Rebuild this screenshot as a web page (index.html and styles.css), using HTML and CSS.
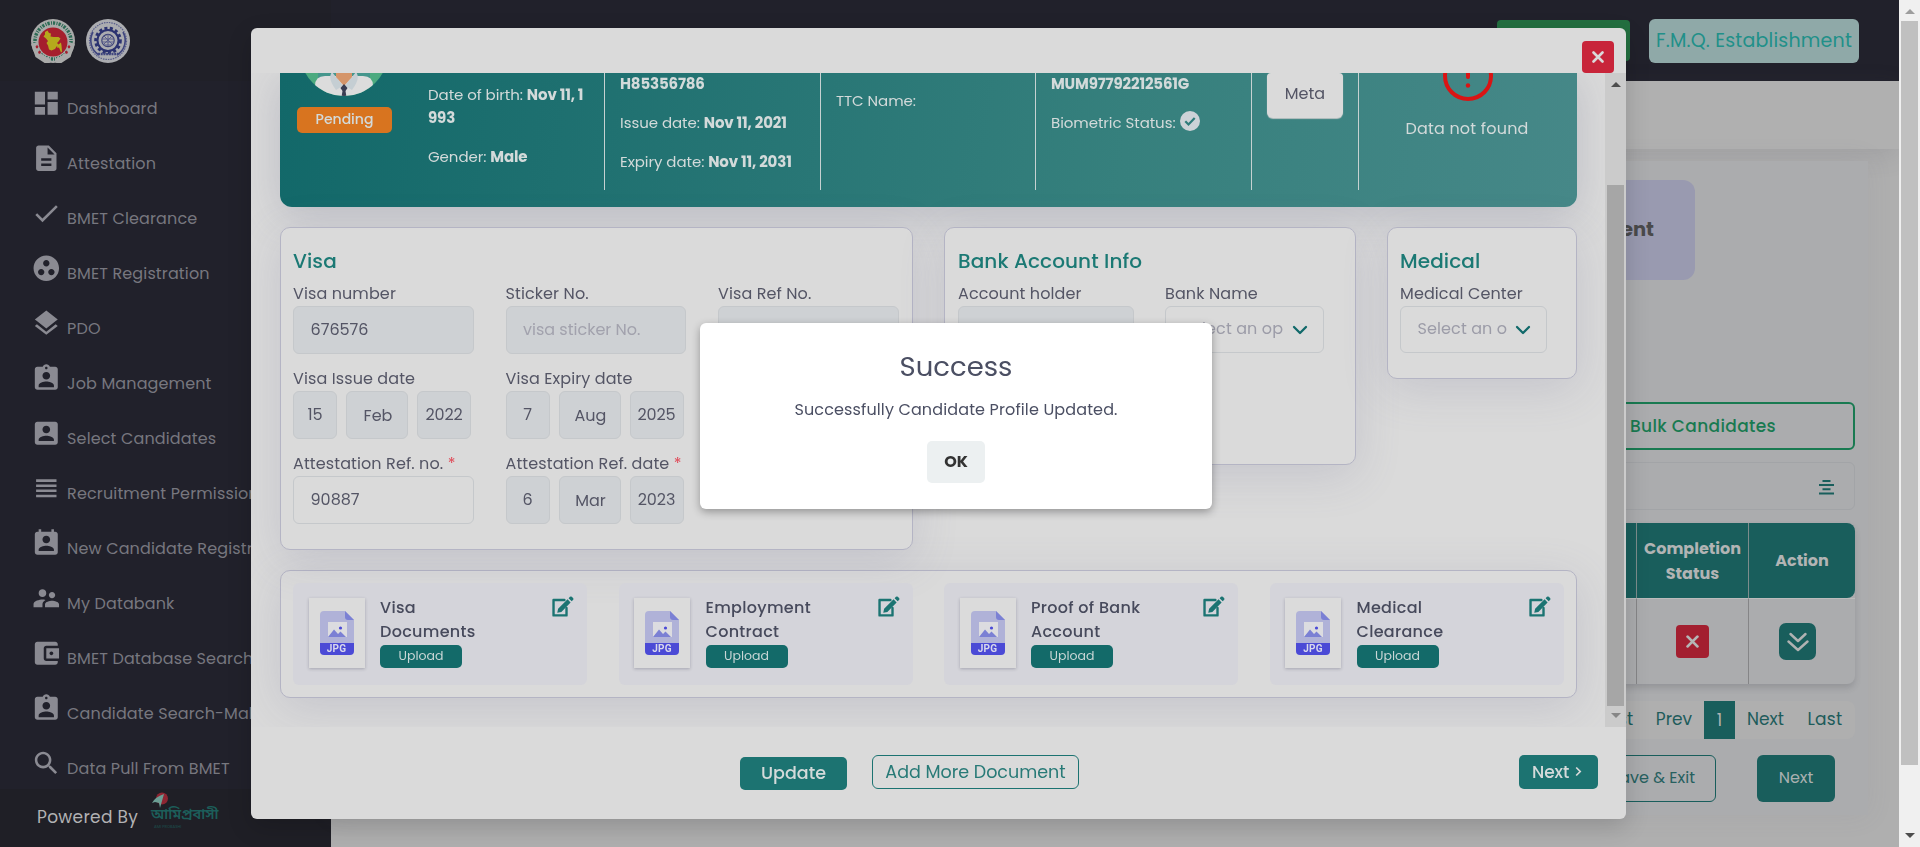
FILE: index.html
```html
<!DOCTYPE html>
<html lang="en">
<head>
<meta charset="utf-8">
<title>Candidate Profile</title>
<link rel="stylesheet" href="styles.css">
</head>
<body>
<svg class="defs" width="0" height="0" aria-hidden="true">
  <symbol id="i-badge" viewBox="0 0 24 24"><path d="M19 3h-4.180C14.4 1.840 13.3 1 12 1c-1.3 0-2.4.84-2.820 2H5c-1.100 0-2 .9-2 2v14c0 1.100.9 2 2 2h14c1.100 0 2-.9 2-2V5c0-1.100-.9-2-2-2zm-7 0c.55 0 1 .45 1 1s-.45 1-1 1-1-.45-1-1 .45-1 1-1zm0 4c1.660 0 3 1.340 3 3s-1.340 3-3 3-3-1.340-3-3 1.340-3 3-3zm6 12H6v-1.400c0-2 4-3.100 6-3.100s6 1.100 6 3.100V19z"/></symbol>
  <symbol id="i-edit" viewBox="0 0 24 22"><path d="M14 4.200H2.600V20.300H16.200V12.500" fill="none" stroke="currentColor" stroke-width="2.500" stroke-linejoin="round" stroke-linecap="round"/><path d="M17.300 3.500l3.200 3.200-9.700 10-4.300.9.900-4.300zM18.400 2.400l1.400-1.500q1-1 2 0l1.200 1.200q1 1 0 2l-1.400 1.500z"/></symbol>
  <symbol id="i-jpg" viewBox="0 0 34 44">
    <path d="M4 0h21l9 9v24H0V4q0-4 4-4z" fill="#b0b2d8"/><path d="M25 0l9 9h-6q-3 0-3-3z" fill="#7b80d4"/>
    <path d="M0 32h34v8q0 4-4 4H4q-4 0-4-4z" fill="#4b4ad6"/><path d="M8 11h19v15H8z" fill="#dcdce0"/>
    <path d="M8 26l6-7.500 4 4.500 2.500-2.500L26 26z" fill="#7b80d4"/><circle cx="20.500" cy="17" r="1.600" fill="#4b4ad6"/></symbol>
  <symbol id="i-down" viewBox="0 0 16 10"><path d="M2 2l6 6 6-6" fill="none" stroke="#11696a" stroke-width="2.300" stroke-linecap="round" stroke-linejoin="round"/></symbol>
  <symbol id="i-x" viewBox="0 0 12 12"><path d="M1.500 1.500l9 9m0-9l-9 9" fill="none" stroke="currentColor" stroke-width="2.600" stroke-linecap="round"/></symbol>
</svg>

<div class="window">
  <div class="app">
    <aside class="side">
      <div class="brand">
        <svg class="seal" viewBox="0 0 44 44"><circle cx="22" cy="22" r="22" fill="#a9aaa9"/><circle cx="22" cy="22" r="18" fill="none" stroke="#2c6b55" stroke-width="3.500" stroke-dasharray="2.200 1.300 1 1" pathLength="110"/><path d="M3 24l4 12 9 6 3-2M41 24l-4 12-9 6-3-2" fill="none" stroke="#a9aaa9" stroke-width="6"/><circle cx="22" cy="23" r="14.500" fill="#a51f2d"/><path d="M14 13l2.500-1.500 1.500 2.500 2 .5-.5 3 3 .5h5l2 1.500-2 3-1.500 1.500 1.500 1.500 2.500-2 .5 3 .5 6-1 1-2-5-1.500.5-.5-2-2 3-3.500 1.500-2.500-1-1-4-1.500-2.500 1.500-2-2-2.500-2.500-2 1.500-2z" fill="#b5aa1c"/><path d="M4.500 27.500l1.500-1.500 1.500 1.500-.8 1.800H5.200zM7 33l1.500-1.500L10 33l-.8 1.800H7.800zM36.500 27.500L38 26l1.500 1.500-.8 1.800h-1.500zM34 33l1.500-1.500L37 33l-.8 1.800h-1.500z" fill="#a51f2d"/></svg>
        <svg class="seal" viewBox="0 0 44 44"><circle cx="22" cy="22" r="22" fill="#abacb0"/><circle cx="22" cy="22" r="18.500" fill="none" stroke="#5a5f8c" stroke-width="1.200" stroke-dasharray="1.500 1"/><path d="M7 13a17 17 0 0 0 6 23M37 13a17 17 0 0 1-6 23" fill="none" stroke="#41477f" stroke-width="1.600"/><circle cx="22" cy="21.500" r="12.300" fill="none" stroke="#2b3270" stroke-width="3" stroke-dasharray="3 2.400"/><circle cx="22" cy="21.500" r="10.500" fill="none" stroke="#2b3270" stroke-width="2"/><circle cx="22" cy="21.500" r="6.200" fill="none" stroke="#3c4277" stroke-width="1.200"/><path d="M16 20h12M16 23h12M18 26h8M22 15v12M18 17l8 8m0-8l-8 8" stroke="#5a5f8c" stroke-width="1"/><path d="M12 35h20" stroke="#41477f" stroke-width="2.500" stroke-dasharray="2 .7"/></svg>
      </div>
      <nav class="menu">
        <a class="item"><svg class="ico" viewBox="0 0 24 24"><path d="M3 13h8V3H3v10zm0 8h8v-6H3v6zm10 0h8V11h-8v10zm0-18v6h8V3h-8z"/></svg><span>Dashboard</span></a>
        <a class="item"><svg class="ico" viewBox="0 0 24 24"><path d="M14 2H6c-1.100 0-1.990.9-1.990 2L4 20c0 1.100.89 2 1.990 2H18c1.100 0 2-.9 2-2V8l-6-6zm2 16H8v-2h8v2zm0-4H8v-2h8v2zm-3-5V3.500L18.500 9H13z"/></svg><span>Attestation</span></a>
        <a class="item"><svg class="ico" viewBox="0 0 24 24"><path d="M9 16.170L4.830 12l-1.420 1.410L9 19 21 7l-1.410-1.410z"/></svg><span>BMET Clearance</span></a>
        <a class="item"><svg class="ico" viewBox="0 0 24 24"><path d="M12 2C6.480 2 2 6.480 2 12s4.480 10 10 10 10-4.480 10-10S17.520 2 12 2zM8 17.500c-1.380 0-2.500-1.120-2.500-2.500s1.120-2.500 2.500-2.500 2.500 1.120 2.500 2.500-1.120 2.500-2.500 2.500zM9.500 8c0-1.380 1.120-2.500 2.500-2.500s2.500 1.120 2.500 2.500-1.120 2.500-2.500 2.500S9.500 9.380 9.500 8zm6.500 9.500c-1.380 0-2.500-1.120-2.500-2.500s1.120-2.500 2.500-2.500 2.500 1.120 2.500 2.500-1.120 2.500-2.500 2.500z"/></svg><span>BMET Registration</span></a>
        <a class="item"><svg class="ico" viewBox="0 0 24 24"><path d="M11.990 18.540l-7.370-5.730L3 14.070l9 7 9-7-1.630-1.270-7.380 5.740zM12 16l7.360-5.730L21 9l-9-7-9 7 1.630 1.270L12 16z"/></svg><span>PDO</span></a>
        <a class="item"><svg class="ico"><use href="#i-badge"/></svg><span>Job Management</span></a>
        <a class="item"><svg class="ico" viewBox="0 0 24 24"><path d="M3 5v14c0 1.100.89 2 2 2h14c1.100 0 2-.9 2-2V5c0-1.100-.9-2-2-2H5c-1.110 0-2 .9-2 2zm12 4c0 1.660-1.340 3-3 3s-3-1.340-3-3 1.340-3 3-3 3 1.340 3 3zm-9 8c0-2 4-3.100 6-3.100s6 1.100 6 3.100v1H6v-1z"/></svg><span>Select Candidates</span></a>
        <a class="item"><svg class="ico" viewBox="0 0 24 24"><path d="M4 15h16v-2H4v2zm0 4h16v-2H4v2zm0-8h16V9H4v2zm0-6v2h16V5H4z"/></svg><span>Recruitment Permission</span></a>
        <a class="item"><svg class="ico" viewBox="0 0 24 24"><path d="M19 3h-1V1h-2v2H8V1H6v2H5c-1.110 0-2 .9-2 2v14c0 1.100.89 2 2 2h14c1.100 0 2-.9 2-2V5c0-1.100-.9-2-2-2zm-7 3c1.660 0 3 1.340 3 3s-1.340 3-3 3-3-1.340-3-3 1.340-3 3-3zm6 12H6v-1c0-2 4-3.100 6-3.100s6 1.100 6 3.100v1z"/></svg><span>New Candidate Registration</span></a>
        <a class="item"><svg class="ico" viewBox="0 0 24 24"><path d="M16.500 12c1.380 0 2.490-1.120 2.490-2.500S17.880 7 16.500 7C15.120 7 14 8.120 14 9.500s1.120 2.500 2.500 2.500zM9 11c1.660 0 2.990-1.340 2.990-3S10.660 5 9 5C7.340 5 6 6.340 6 8s1.340 3 3 3zm7.500 3c-1.830 0-5.500.92-5.500 2.750V19h11v-2.250c0-1.830-3.670-2.750-5.500-2.750zM9 13c-2.330 0-7 1.170-7 3.500V19h7v-2.250c0-.85.33-2.340 2.370-3.470C10.500 13.100 9.660 13 9 13z"/></svg><span>My Databank</span></a>
        <a class="item"><svg class="ico" viewBox="0 0 24 24"><path d="M21 18v1c0 1.100-.9 2-2 2H5c-1.110 0-2-.9-2-2V5c0-1.100.89-2 2-2h14c1.100 0 2 .9 2 2v1h-9c-1.110 0-2 .9-2 2v8c0 1.100.89 2 2 2h9zm-9-2h10V8H12v8zm4-2.500c-.83 0-1.500-.67-1.500-1.500s.67-1.500 1.500-1.500 1.500.67 1.500 1.500-.67 1.500-1.500 1.500z"/></svg><span>BMET Database Search</span></a>
        <a class="item"><svg class="ico"><use href="#i-badge"/></svg><span>Candidate Search-Male</span></a>
        <a class="item"><svg class="ico" viewBox="0 0 24 24"><path d="M15.500 14h-.79l-.28-.27C15.410 12.590 16 11.110 16 9.500 16 5.910 13.090 3 9.500 3S3 5.910 3 9.500 5.910 16 9.500 16c1.610 0 3.090-.59 4.230-1.570l.27.28v.79l5 4.990L20.490 19l-4.990-5zm-6 0C7.010 14 5 11.990 5 9.500S7.010 5 9.500 5 14 7.010 14 9.500 11.990 14 9.500 14z"/></svg><span>Data Pull From BMET</span></a>
      </nav>
      <div class="powered"><span>Powered By</span>
        <div class="ami">
          <svg class="ami-bird" viewBox="0 0 18 17"><circle cx="11" cy="6.500" r="6" fill="#8e2532"/><path d="M1 11Q4 5 13 2L9 16l-1-5-4-1z" fill="#6b9e94"/></svg>
          <span class="ami-name">আমিপ্রবাসী</span><span class="ami-sub">AMI PROBASHI</span>
        </div>
      </div>
    </aside>

    <main class="main">
      <header class="top"><span class="green"></span><span class="org">F.M.Q. Establishment</span></header>
      <div class="subbar"></div>
      <section class="panel">
        <div class="tab">ent</div>
        <div class="bulk">Bulk Candidates</div>
        <div class="searchbox"><svg width="15" height="15" viewBox="0 0 15 15"><path d="M3.500 1h8M0 5h15M3.500 9.200h8M0 13.500h15" stroke="#195e5c" stroke-width="2"/></svg></div>
        <div class="table">
          <div class="th"></div><div class="th">Completion Status</div><div class="th last">Action</div>
          <div class="td"></div><div class="td"><span class="no"><svg width="13" height="13"><use href="#i-x"/></svg></span></div>
          <div class="td last"><span class="more"><svg width="22" height="20" viewBox="0 0 22 20"><path d="M3.500 2L11 9l7.500-7M1.500 9.500L11 18l9.500-8.500" fill="none" stroke="#b0b2b2" stroke-width="2.400" stroke-linecap="round" stroke-linejoin="round"/></svg></span></div>
        </div>
        <div class="pages"><span class="pg first">First</span><span class="pg prev">Prev</span><span class="pg on">1</span><span class="pg nxt">Next</span><span class="pg lst">Last</span></div>
        <div class="acts"><span class="save">Save &amp; Exit</span><span class="go">Next</span></div>
      </section>
    </main>
  </div>
  <div class="winbar"><i class="tri tri-up dim"></i><b class="thumb"></b><i class="tri tri-down"></i></div>
</div>

<div class="modal">
  <div class="modal-head"><span class="close"><svg width="12" height="12"><use href="#i-x"/></svg></span></div>
  <div class="modal-mid">
    <div class="content">
      <section class="strip">
        <div class="cell who">
          <div class="photo">
            <svg class="avatar" width="88" height="23" viewBox="0 65 88 23"><defs><clipPath id="disc"><circle cx="44" cy="44" r="44"/></clipPath></defs><g clip-path="url(#disc)"><path d="M0 60h88v30H0z" fill="#4caa7f"/><path d="M18 60h52v12H18z" fill="#45968c"/><path d="M15 90V78q0-10 10-10h38q10 0 10 10v12z" fill="#dcdcdc"/><path d="M32 64l12 15 12-15q5 6-4 18l-8-5-8 5q-9-12-4-18z" fill="#c5ced3"/><path d="M36 60h16v9l-8 9-8-9z" fill="#d5956a"/><path d="M40.500 80l3.500-4 3.500 4-2 3 1 6h-5l1-6z" fill="#3a3d52"/></g></svg>
            <span class="pending">Pending</span>
          </div>
          <div class="facts dob"><p>Date of birth: <b>Nov 11, 1<br>993</b></p><p>Gender: <b>Male</b></p></div>
        </div>
        <div class="cell facts"><p><b>H85356786</b></p><p>Issue date: <b>Nov 11, 2021</b></p><p>Expiry date: <b>Nov 11, 2031</b></p></div>
        <div class="cell facts ttc"><p>TTC Name:</p></div>
        <div class="cell facts"><p><b>MUM97792212561G</b></p><p class="bio">Biometric Status: <svg width="20" height="20" viewBox="0 0 20 20"><circle cx="10" cy="10" r="10" fill="#cdd2d7"/><path d="M5.300 10.300l3.200 3.200 6.200-6.400" fill="none" stroke="#2f7b7a" stroke-width="2.200"/></svg></p></div>
        <div class="cell metawrap"><span class="meta">Meta</span></div>
        <div class="cell missing"><svg width="50" height="28" viewBox="0 22 50 28"><circle cx="25" cy="25" r="23" fill="none" stroke="#d91414" stroke-width="4"/><path d="M25 14v12" stroke="#d91414" stroke-width="4" stroke-linecap="round"/><circle cx="25" cy="34.500" r="2.200" fill="#d91414"/></svg><span>Data not found</span></div>
      </section>

      <div class="cards">
        <section class="card visa"><h3>Visa</h3>
          <div class="grid">
            <div class="field"><label>Visa number</label><span class="in off">676576</span></div>
            <div class="field"><label>Sticker No.</label><span class="in off ph">visa sticker No.</span></div>
            <div class="field"><label>Visa Ref No.</label><span class="in off ph">visa ref no.</span></div>
            <div class="field"><label>Visa Issue date</label><div class="date"><span class="in off d">15</span><span class="in off m">Feb</span><span class="in off y">2022</span></div></div>
            <div class="field wide"><label>Visa Expiry date</label><div class="date"><span class="in off d">7</span><span class="in off m">Aug</span><span class="in off y">2025</span></div></div>
            <div class="field"><label>Attestation Ref. no. <em>*</em></label><span class="in">90887</span></div>
            <div class="field wide"><label>Attestation Ref. date <em>*</em></label><div class="date"><span class="in off d">6</span><span class="in off m">Mar</span><span class="in off y">2023</span></div></div>
          </div>
        </section>
        <section class="card bank"><h3>Bank Account Info</h3>
          <div class="row2">
            <div class="field"><label>Account holder</label><span class="in off"></span></div>
            <div class="field"><label>Bank Name</label><span class="in sel"><span>Select an op</span><svg width="16" height="10"><use href="#i-down"/></svg></span></div>
          </div>
        </section>
        <section class="card med"><h3>Medical</h3>
          <div class="field"><label>Medical Center</label><span class="in sel"><span>Select an o</span><svg width="16" height="10"><use href="#i-down"/></svg></span></div>
        </section>
      </div>

      <section class="card docs">
        <div class="doc"><span class="file"><svg width="34" height="44"><use href="#i-jpg"/></svg><i class="jpg">JPG</i></span><div class="dt"><strong>Visa<br>Documents</strong><span class="upload">Upload</span></div><svg class="edit"><use href="#i-edit"/></svg></div>
        <div class="doc"><span class="file"><svg width="34" height="44"><use href="#i-jpg"/></svg><i class="jpg">JPG</i></span><div class="dt"><strong>Employment<br>Contract</strong><span class="upload">Upload</span></div><svg class="edit"><use href="#i-edit"/></svg></div>
        <div class="doc"><span class="file"><svg width="34" height="44"><use href="#i-jpg"/></svg><i class="jpg">JPG</i></span><div class="dt"><strong>Proof of Bank<br>Account</strong><span class="upload">Upload</span></div><svg class="edit"><use href="#i-edit"/></svg></div>
        <div class="doc"><span class="file"><svg width="34" height="44"><use href="#i-jpg"/></svg><i class="jpg">JPG</i></span><div class="dt"><strong>Medical<br>Clearance</strong><span class="upload">Upload</span></div><svg class="edit"><use href="#i-edit"/></svg></div>
      </section>
    </div>
    <div class="bar"><i class="tri tri-up"></i><b class="thumb"></b><i class="tri tri-down dim"></i></div>
  </div>
  <footer class="foot"><span class="update">Update</span><span class="add">Add More Document</span><span class="next">Next <svg width="7" height="11" viewBox="0 0 7 11"><path d="M1.200 1.500l4 4-4 4" fill="none" stroke="#dadada" stroke-width="1.700"/></svg></span></footer>
</div>

<div class="alert"><h2>Success</h2><p>Successfully Candidate Profile Updated.</p><button class="ok">OK</button></div>
</body>
</html>
```
FILE: styles.css
```css
* { box-sizing: border-box; }
body { margin: 0; width: 1920px; height: 847px; overflow: hidden; background: #afafaf; font: 16px/24px Poppins, Inter, "Noto Sans", sans-serif; color: #545565; }
p, h2, h3 { margin: 0; }
.defs { position: absolute; }
svg { display: block; fill: currentColor; flex: none; }
.window { display: flex; height: 847px; }
.app { display: flex; width: 1899px; overflow: hidden; }

/* sidebar */
.side { width: 331px; flex: none; background: #21212b; display: flex; flex-direction: column; overflow: hidden; }
.brand { height: 81px; background: #202028; display: flex; gap: 11px; padding: 19px 31px; flex: none; }
.seal { width: 44px; height: 44px; }
.menu { height: 708px; flex: none; overflow: hidden; }
.item { display: flex; height: 55px; align-items: flex-start; padding-left: 31px; color: #8a8a92; white-space: nowrap; }
.item .ico { width: 30.600px; height: 30.600px; margin-top: 6.500px; }
.item span { margin: 15.500px 0 0 5.500px; color: #77777f; letter-spacing: .13px; }
.powered { height: 58px; background: #1f1f26; display: flex; padding-left: 37px; color: #b2b2b4; font-size: 17px; }
.powered > span { padding-top: 16px; letter-spacing: .3px; width: 114px; }
.ami { width: 68px; padding-top: 3px; display: flex; flex-direction: column; }
.ami-bird { width: 18px; height: 17px; }
.ami-name { font: 600 14.500px/18px "Noto Sans Bengali", "Noto Sans", sans-serif; color: #1c5e5a; white-space: nowrap; margin-top: -2px; }
.ami-sub { font-size: 4px; line-height: 4px; color: #1c4f4d; padding-left: 3px; }

/* background page */
.main { flex: 1; display: flex; flex-direction: column; }
.top { height: 81px; background: #21212b; display: flex; justify-content: flex-end; gap: 19px; padding: 19px 40px 0 0; flex: none; }
.green { width: 133px; height: 41px; margin-top: 1px; border-radius: 4px; background: #236f40; }
.org { width: 210px; height: 44px; border-radius: 6px; background: #8fa9a8; color: #219089; font-size: 19px; line-height: 44px; text-align: center; letter-spacing: .2px; white-space: nowrap; }
.subbar { height: 68px; background: #b0b0b0; box-shadow: 0 6px 24px rgba(90,90,100,.16); flex: none; }
.panel { height: 654px; margin: 12px 31px 0 0; background: #abacae; padding: 19px 13px 0 0; display: flex; flex-direction: column; align-items: flex-end; box-shadow: 0 0 24px rgba(110,110,125,.1); }
.tab { width: 200px; height: 100px; margin-right: 160px; border-radius: 12px; background: #999ab0; color: #4a4a4b; font-weight: 700; font-size: 19.500px; line-height: 100px; text-align: right; padding-right: 41px; }
.bulk { width: 400px; height: 48px; margin-top: 122px; border: 2px solid #197a51; border-radius: 6px; color: #197a51; font-weight: 500; line-height: 44px; text-align: right; padding-right: 77px; font-size: 17px; letter-spacing: .35px; }
.searchbox { width: 400px; height: 48px; margin-top: 12px; border: 1px solid #a2a4a7; border-radius: 6px; display: flex; justify-content: flex-end; padding: 17px 20px 0 0; }
.table { display: grid; grid-template-columns: 101px 112px 106px; grid-template-rows: 75px 86px; margin-top: 13px; border-radius: 8px; box-shadow: 0 4px 6px rgba(60,60,70,.2); background: #abacae; }
.th { background: #195e5c; color: #b2b4b4; border-right: 1px solid #7d8c8c; font-weight: 700; line-height: 25px; text-align: center; display: flex; align-items: center; justify-content: center; letter-spacing: 0; }
.td { border-right: 1px solid #858587; border-top: 1px solid #bcbcbc; display: flex; align-items: center; justify-content: center; }
.th.last { border-radius: 0 8px 8px 0; border: 0; }
.td.last { border-right: 0; padding-right: 9px; }
.no { width: 33px; height: 33px; border-radius: 4px; background: #a31f30; color: #b5b5b5; display: flex; align-items: center; justify-content: center; }
.more { width: 37px; height: 37px; border-radius: 7px; background: #195e5c; display: flex; align-items: center; justify-content: center; }
.pages { display: flex; width: 300px; height: 38px; margin-top: 17px; border-radius: 8px; background: #afafaf; justify-content: flex-end; line-height: 37px; color: #1e5c5b; font-size: 17px; }
.pg { text-align: center; }
.first { width: 45px; text-align: right; padding-right: 12px; }
.prev { width: 60px; }
.pg.on { width: 31px; background: #195e5c; color: #b0b2b2; line-height: 38px; }
.nxt { width: 61px; }
.lst { width: 59px; padding-right: 1px; letter-spacing: .3px; }
.acts { display: flex; gap: 41px; margin-top: 16px; padding-right: 20px; line-height: 46px; }
.save { width: 160px; height: 47px; border: 1px solid #195e5c; border-radius: 6px; color: #27605f; text-align: right; padding-right: 20px; line-height: 44px; }
.go { width: 78px; height: 47px; border-radius: 6px; background: #195e5c; color: #a9b0b0; text-align: center; }

/* scrollbars */
.winbar, .bar { width: 21px; background: #f0f0f0; display: flex; flex-direction: column; align-items: center; flex: none; }
.winbar .thumb { width: 17px; height: 744px; background: #c0c0c0; margin-top: 7px; }
.tri { width: 0; height: 0; border: 5px solid transparent; flex: none; }
.tri-up { border-bottom-color: #4d4d4d; border-top: 0; }
.tri-down { border-top-color: #4d4d4d; border-bottom: 0; }
.winbar .tri-up { margin-top: 9px; border-bottom-color: #9d9d9d; }
.winbar .tri-down { margin-top: 68px; }

/* profile modal */
.modal { position: fixed; left: 251px; top: 28px; width: 1375px; height: 791px; background: #dadada; border-radius: 6px; box-shadow: 0 8px 24px rgba(0,0,0,.16); overflow: hidden; }
.modal-head { height: 45px; display: flex; justify-content: flex-end; padding: 13px 12px 0 0; }
.close { width: 32px; height: 32px; border-radius: 4px; background: #c8253a; color: #dadada; display: flex; align-items: center; justify-content: center; }
.modal-mid { height: 654px; display: flex; overflow: hidden; }
.content { width: 1354px; padding: 0 28px 0 29px; overflow: hidden; }
.bar { background: #cbcbcb; }
.bar .tri-up { margin-top: 9px; }
.bar .thumb { width: 17px; height: 521px; background: #a6a6a6; margin-top: 98px; }
.bar .tri-down { margin-top: 7px; border-top-color: #868686; }
.strip { height: 134px; border-radius: 0 0 12px 12px; background: linear-gradient(98deg, #126869 0%, #297776 42%, #36807d 65%, #468888 100%); padding-bottom: 17px; display: grid; grid-template-columns: 325px 216px 215px 216px 107px 218px; color: #d3dada; box-shadow: 0 8px 40px rgba(100,105,135,.26); }
.cell { border-right: 1px solid #c6d1d1; }
.cell.facts { padding-left: 15px; }
.facts p { font-size: 15px; line-height: 23px; margin-bottom: 16px; letter-spacing: -.06px; white-space: nowrap; }
.cell.facts p:first-child { margin-top: -1px; }
.cell.ttc p:first-child { margin-top: 16px; }
.facts b { font-weight: 700; letter-spacing: -.15px; }
.who { display: flex; }
.photo { width: 148px; display: flex; flex-direction: column; padding-left: 17px; flex: none; }
.avatar { margin-left: 3px; }
.pending { margin-top: 11px; width: 95px; height: 26px; border-radius: 5px; background: #d8741f; text-align: center; font-size: 14px; line-height: 24px; font-weight: 500; }
.dob { padding-top: 10px; }
.bio { display: flex; align-items: flex-start; gap: 4px; }
.metawrap { padding-left: 15px; }
.meta { display: block; width: 76px; height: 45px; border-radius: 4px 4px 6px 6px; background: #dadada; color: #545565; line-height: 41px; text-align: center; box-shadow: 0 1px 1px #bcc4c4; }
.missing { border: 0; display: flex; flex-direction: column; align-items: center; }
.missing span { margin-top: 16px; padding-right: 2px; letter-spacing: .2px; }

.cards { display: flex; gap: 31px; align-items: flex-start; margin-top: 20px; }
.card { background: #dadada; border: 1px solid #b4b4c4; border-radius: 10px; box-shadow: 0 10px 45px rgba(105,108,145,.19); }
.card h3 { font-size: 20px; line-height: 30px; font-weight: 500; color: #1b7974; margin-bottom: 5px; letter-spacing: .1px; }
.visa, .bank, .med { padding: 18px 12px 0; }
.visa { width: 633px; height: 323px; }
.bank { width: 412px; height: 238px; padding-left: 13px; }
.med { width: 190px; height: 152px; }
.grid { display: grid; grid-template-columns: repeat(3, 180.500px); gap: 12px 32px; }
.wide { grid-column: 2 / 4; }
.row2 { display: grid; grid-template-columns: 176px 159px; gap: 31px; }
label { display: block; height: 24px; line-height: 26px; margin-bottom: 1px; white-space: nowrap; letter-spacing: .1px; }
label em { color: #e04a58; font-style: normal; }
.in { display: block; height: 48px; border: 1px solid #c5c8cb; border-radius: 6px; padding-left: 16.500px; line-height: 46px; white-space: nowrap; overflow: hidden; }
.off { background: #ced1d4; }
.ph { color: #a2a2ad; }
.date { display: flex; gap: 9px; }
.date .in { padding: 0; text-align: center; line-height: 45px; }
.date .d { width: 44px; }
.date .m { width: 62px; line-height: 47px; padding-left: 2px; }
.date .y { width: 54px; letter-spacing: -.1px; }
.sel { height: 47px; color: #9c9ca8; display: flex; align-items: center; justify-content: space-between; padding-right: 15px; line-height: 42px; }
.sel span { padding-bottom: 1px; letter-spacing: .1px; }
.med .sel { width: 147px; }

.docs { height: 128px; margin-top: 20px; padding: 12px; display: flex; gap: 31.500px; }
.doc { width: 294px; height: 102px; border-radius: 6px; background: #d4d4da; display: flex; padding: 14px 13px 0 15.500px; flex: none; }
.file { width: 56px; height: 70.500px; background: #dbdbdb; box-shadow: 0 1px 3px rgba(60,60,80,.3); display: grid; justify-items: center; align-items: start; padding-top: 13.500px; flex: none; margin-top: .5px; }
.file > * { grid-area: 1 / 1; }
.jpg { font: 700 10px/12px Roboto, sans-serif; letter-spacing: .3px; color: #d8d8ec; margin-top: 32px; }
.dt { margin-left: 15.500px; flex: 1; display: flex; flex-direction: column; align-items: flex-start; }
.dt strong { font-weight: 500; color: #474a5c; margin-top: -1px; height: 49px; letter-spacing: .3px; white-space: nowrap; }
.upload { width: 82px; height: 23px; border-radius: 5px; background: #136a69; color: #c9d6d6; font-size: 12.500px; line-height: 22px; text-align: center; }
.edit { width: 23px; height: 21px; color: #1b7472; margin-top: -1px; }

.foot { display: flex; height: 92px; padding-top: 28px; padding-left: 489px; font-size: 18px; }
.update { width: 107px; height: 33px; margin-top: 2px; border-radius: 5px; background: #1c7371; color: #d4dada; font-weight: 500; font-size: 17.500px; line-height: 32px; text-align: center; }
.add { width: 207px; height: 34px; margin-left: 25px; border: 1px solid #1c7371; border-radius: 6px; color: #287a77; font-size: 17.500px; line-height: 32px; text-align: center; }
.next { display: flex; align-items: center; gap: 6px; width: 79px; height: 34px; margin-left: 440px; border-radius: 5px; background: #1c7371; color: #d4dada; padding: 0 0 1px 13px; font-size: 17px; font-weight: 500; letter-spacing: -.1px; }

/* success alert */
.alert { position: fixed; left: 700px; top: 323px; width: 512px; height: 186px; border-radius: 6px; background: #fff; box-shadow: 0 3px 8px rgba(0,0,0,.32); display: flex; flex-direction: column; align-items: center; color: #4b4f63; }
.alert h2 { font-size: 27.500px; line-height: 36px; font-weight: 400; margin-top: 26px; }
.alert p { margin-top: 13px; letter-spacing: .13px; }
.ok { margin-top: 19px; width: 58px; height: 42px; border: 0; border-radius: 5px; background: #ecf0f1; color: #333; font: 700 16px/24px Poppins, Inter, sans-serif; padding: 0; }
```
